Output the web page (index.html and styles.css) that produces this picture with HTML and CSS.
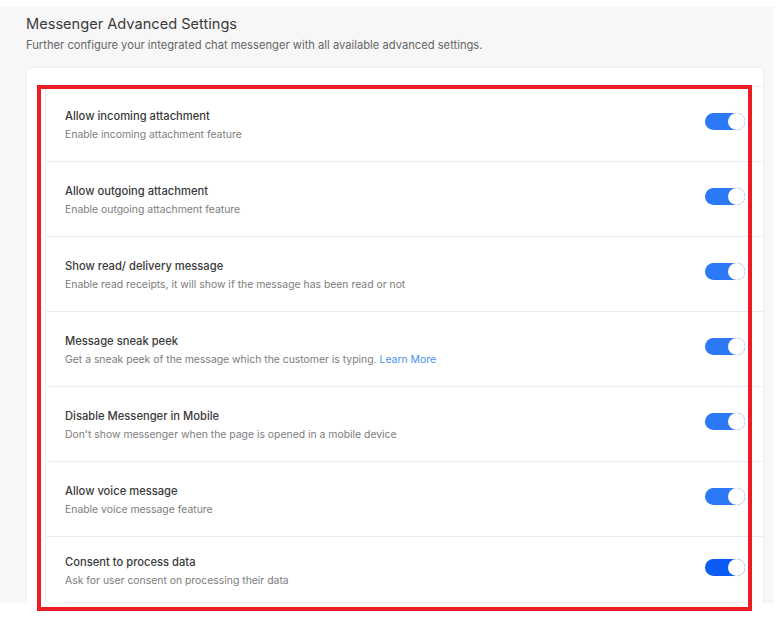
FILE: index.html
```html
<!DOCTYPE html>
<html lang="en">
<head>
  <meta charset="UTF-8" />
  <title>Messenger Advanced Settings</title>
  <link rel="stylesheet" href="styles.css">
</head>
<body>

<div class="page">
  <header class="page-head">
    <h1>Messenger Advanced Settings</h1>
    <p>Further configure your integrated chat messenger with all available advanced settings.</p>
  </header>

  <div class="card">
    <ul class="settings">
      <li class="setting">
        <div class="setting-text">
          <div class="setting-title">Allow incoming attachment</div>
          <div class="setting-desc">Enable incoming attachment feature</div>
        </div>
        <span class="toggle on"></span>
      </li>
      <li class="setting">
        <div class="setting-text">
          <div class="setting-title">Allow outgoing attachment</div>
          <div class="setting-desc">Enable outgoing attachment feature</div>
        </div>
        <span class="toggle on"></span>
      </li>
      <li class="setting">
        <div class="setting-text">
          <div class="setting-title">Show read/ delivery message</div>
          <div class="setting-desc">Enable read receipts, it will show if the message has been read or not</div>
        </div>
        <span class="toggle on"></span>
      </li>
      <li class="setting">
        <div class="setting-text">
          <div class="setting-title">Message sneak peek</div>
          <div class="setting-desc">Get a sneak peek of the message which the customer is typing. <a href="#">Learn More</a></div>
        </div>
        <span class="toggle on"></span>
      </li>
      <li class="setting">
        <div class="setting-text">
          <div class="setting-title">Disable Messenger in Mobile</div>
          <div class="setting-desc">Don't show messenger when the page is opened in a mobile device</div>
        </div>
        <span class="toggle on"></span>
      </li>
      <li class="setting">
        <div class="setting-text">
          <div class="setting-title">Allow voice message</div>
          <div class="setting-desc">Enable voice message feature</div>
        </div>
        <span class="toggle on"></span>
      </li>
      <li class="setting last">
        <div class="setting-text">
          <div class="setting-title">Consent to process data</div>
          <div class="setting-desc">Ask for user consent on processing their data</div>
        </div>
        <span class="toggle on focused"></span>
      </li>
    </ul>
  </div>
</div>

<div class="highlight-box"></div>

</body>
</html>
```

FILE: styles.css
```css
:root {
  --bg: #f7f7f7;
  --text: #383838;
  --muted: #7c7c7c;
  --line: #e9edf5;
  --blue: #2b79f7;
  --blue-dark: #0a5cf4;
  --red: #ec1c24;
}

* {
  box-sizing: border-box;
}

html,
body {
  height: 620px;
  overflow: hidden;
}

body {
  margin: 0;
  padding-top: 7px;
  background: #fff;
  font-family: Inter, 'Noto Sans', sans-serif;
  color: var(--text);
  position: relative;
}

.page {
  width: 774px;
  height: 596px;
  overflow: hidden;
  background: var(--bg);
  padding: 8px 0 0 26px;
}

.page-head h1 {
  margin: 0;
  font-size: 14.6px;
  font-weight: 400;
  color: #3b3b3b;
  line-height: 19px;
}

.page-head p {
  margin: 4px 0 0;
  font-size: 11.2px;
  color: #666;
  line-height: 15px;
}

.card {
  margin-top: 14px;
  width: 738px;
  height: 600px;
  background: #fff;
  border: 1px solid #eef0f5;
  border-radius: 6px;
  padding: 18px 0 0 18px;
}

.settings {
  list-style: none;
  margin: 0;
  padding: 0;
  border-left: 1px solid var(--line);
  border-top: 1px solid var(--line);
}

.setting {
  display: flex;
  align-items: center;
  justify-content: space-between;
  height: 75px;
  padding: 0 18px 0 19px;
  border-bottom: 1px solid var(--line);
}

.setting.last {
  height: 66px;
  border-bottom: none;
  position: relative;
}

.setting.last::after {
  content: '';
  position: absolute;
  left: 19px;
  right: 19px;
  bottom: 0;
  border-bottom: 1px solid var(--line);
}

.setting-text {
  padding-top: 3px;
}

.setting-title {
  font-size: 11.2px;
  font-weight: 500;
  line-height: 18px;
  color: #3a3a3a;
}

.setting-desc {
  margin-top: 1px;
  font-size: 10.4px;
  line-height: 18px;
  color: var(--muted);
}

.setting-desc a {
  color: #4b8ff2;
  text-decoration: none;
}

.toggle {
  width: 40px;
  height: 17px;
  margin-bottom: 5px;
  border-radius: 9px;
  background: #ccc;
  position: relative;
  flex: 0 0 auto;
}

.toggle.on {
  background: var(--blue);
}

.toggle.focused {
  background: var(--blue-dark);
}

.toggle::after {
  content: '';
  position: absolute;
  top: 0;
  left: 0;
  width: 17px;
  height: 17px;
  border-radius: 50%;
  background: #fff;
  box-shadow: 0 0 2px rgba(0,0,0,0.15);
}

.toggle.on::after {
  left: auto;
  right: 0;
}

.highlight-box {
  position: absolute;
  left: 37px;
  top: 85px;
  width: 715px;
  height: 526px;
  border: 4px solid var(--red);
}
```
